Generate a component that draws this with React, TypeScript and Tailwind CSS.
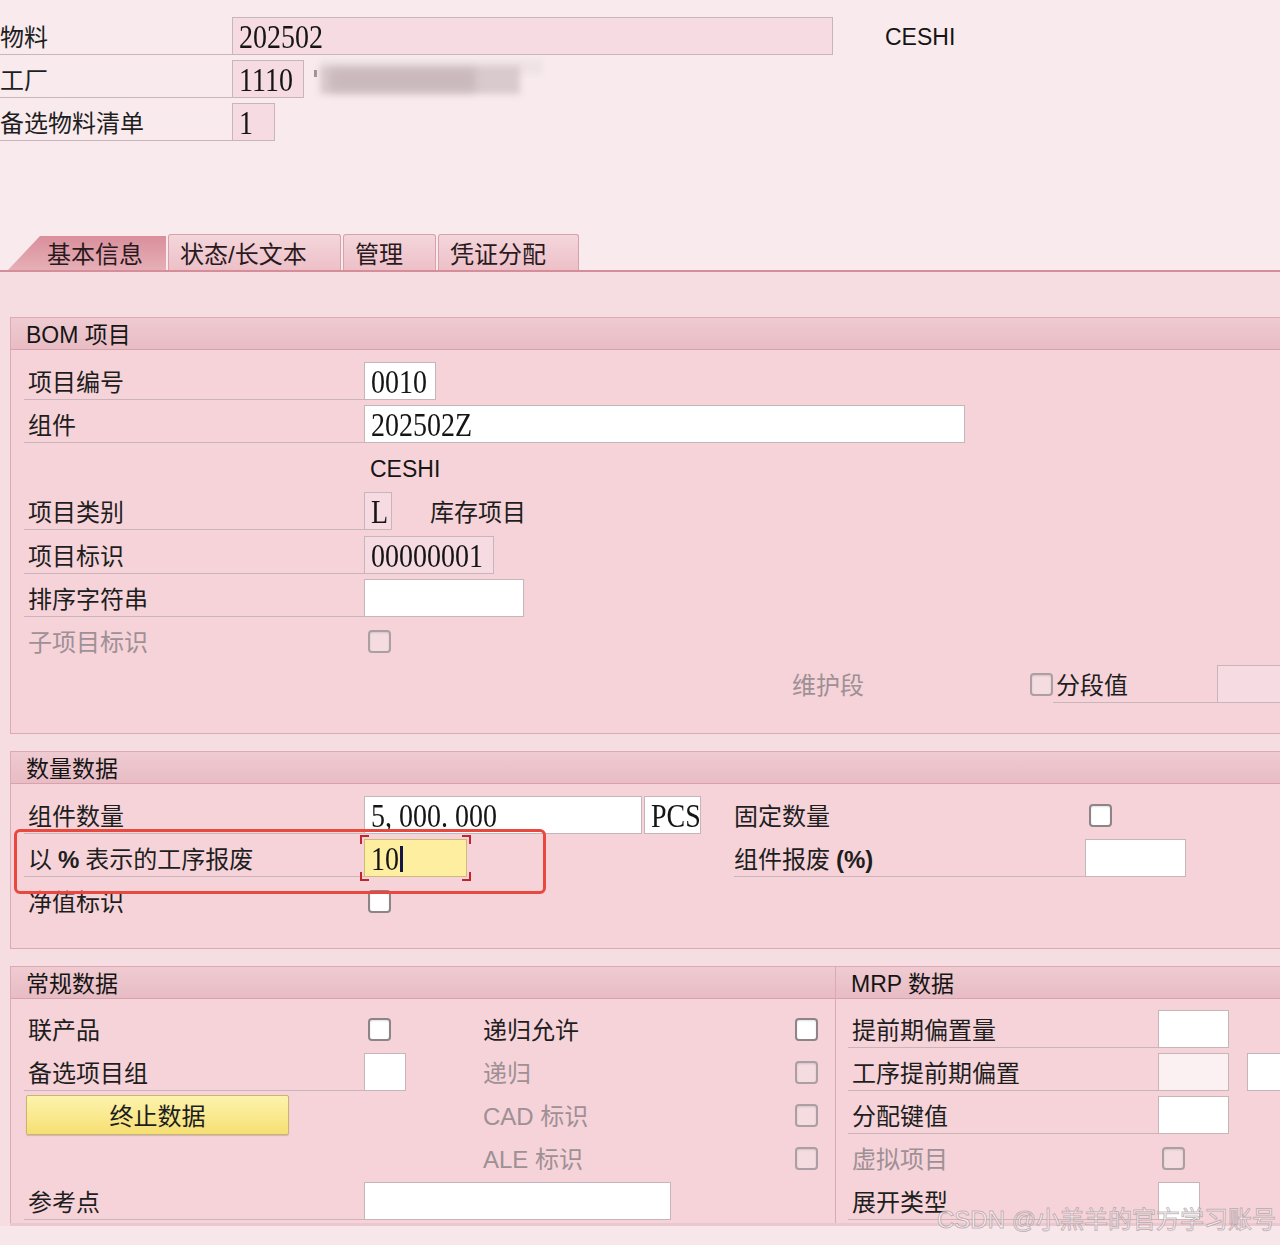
import React from 'react';

const sans = "font-['Liberation_Sans','Noto_Sans_CJK_SC',sans-serif]";
const serif = "font-['Liberation_Serif','Noto_Serif_CJK_SC',serif]";

// input-like box with SAP fixed font text
function Box({ w, value, tone = 'white', children }: { w: string; value?: string; tone?: 'white' | 'pink' | 'soft'; children?: React.ReactNode }) {
  const bg = tone === 'white' ? 'bg-white' : tone === 'pink' ? 'bg-[#f6dce2]' : 'bg-[#fbf1f3]';
  return (
    <div className={`${w} h-[38px] shrink-0 ${bg} border border-[#c6b6ba] flex items-center pl-[6px] pt-[2px] relative`}>
      {value && <span className={`${serif} text-[28px] leading-none text-[#151515] inline-block scale-y-120`}>{value}</span>}
      {children}
    </div>
  );
}

function Check({ disabled = false }: { disabled?: boolean }) {
  return (
    <div
      className={`w-[23px] h-[23px] shrink-0 rounded-[4px] border-2 ${
        disabled ? 'border-[#ab9fa3] bg-[#f4dce1]' : 'border-[#8e8488] bg-white'
      } shadow-[inset_0_1px_2px_rgba(0,0,0,0.12)]`}
    />
  );
}

function Label({ text, w, line = true, gray = false, pl = 'pl-[4px]' }: { text: React.ReactNode; w: string; line?: boolean; gray?: boolean; pl?: string }) {
  return (
    <div
      className={`${w} h-[38px] shrink-0 flex items-center pt-[4px] ${pl} text-[24px] ${gray ? 'text-[#9e9095]' : 'text-[#1e1e1e]'} ${
        line ? 'border-b border-[#c9b5ba]' : ''
      }`}
    >
      {text}
    </div>
  );
}

function GroupHeader({ title }: { title: string }) {
  return (
    <div className="h-[32px] flex items-center pt-[3px] pl-[15px] text-[23px] text-[#151515] bg-gradient-to-b from-[#efcbd1] to-[#e8bcc4] border-b border-[#d7a2ac]">
      {title}
    </div>
  );
}

function Tab({ text, active = false, w }: { text: string; active?: boolean; w: string }) {
  if (active) {
    return (
      <div className={`${w} h-[34px] bg-gradient-to-b from-[#d98f9b] to-[#e6afb7] [clip-path:polygon(32px_0,100%_0,100%_100%,0_100%)] flex items-center pt-[4px] pl-[39px] text-[24px] text-[#2a1a1d]`}>
        {text}
      </div>
    );
  }
  return (
    <div className={`${w} h-[36px] ml-[2px] bg-gradient-to-b from-[#f4d6db] to-[#edc0c8] border border-b-0 border-[#d5a2ab] rounded-t-[3px] flex items-center pt-[4px] pl-[11px] text-[24px] text-[#2a1a1d]`}>
      {text}
    </div>
  );
}

function Bracket({ pos }: { pos: 'tl' | 'tr' | 'bl' | 'br' }) {
  const map = {
    tl: 'left-[-5px] top-[-5px] border-l-2 border-t-2',
    tr: 'right-[-5px] top-[-5px] border-r-2 border-t-2',
    bl: 'left-[-5px] bottom-[-5px] border-l-2 border-b-2',
    br: 'right-[-5px] bottom-[-5px] border-r-2 border-b-2',
  };
  return <div className={`absolute w-[9px] h-[9px] border-[#c3262a] ${map[pos]}`} />;
}

export default function App() {
  return (
    <div className={`w-[1280px] h-[1245px] overflow-hidden relative bg-[#f8eaed] ${sans} text-[#1e1e1e]`}>
      {/* header fields */}
      <div className="pt-[17px] flex flex-col gap-[5px]">
        <div className="flex items-center">
          <Label text="物料" w="w-[232px]" pl="pl-0" />
          <Box w="w-[601px]" value="202502" tone="pink" />
          <div className="ml-[52px] pt-[3px] text-[23px] text-[#151515]">CESHI</div>
        </div>
        <div className="flex items-center">
          <Label text="工厂" w="w-[232px]" pl="pl-0" />
          <Box w="w-[72px]" value="1110" tone="pink" />
          <div className="relative ml-[10px] w-[230px] h-[38px]">
            <div className="absolute left-[0px] top-[10px] w-[3px] h-[7px] bg-[#9b9094]" />
            <div className="absolute left-[8px] top-[0px] w-[220px] h-[14px] bg-[#efe3e6] blur-[2px]" />
            <div className="absolute left-[6px] top-[6px] w-[200px] h-[28px] bg-[#d9cacd] blur-[3px]" />
            <div className="absolute left-[16px] top-[9px] w-[145px] h-[22px] bg-[#c9b8bc] blur-[4px]" />
          </div>
        </div>
        <div className="flex items-center">
          <Label text="备选物料清单" w="w-[232px]" pl="pl-0" />
          <Box w="w-[43px]" value="1" tone="pink" />
        </div>
      </div>

      {/* tabs */}
      <div className="mt-[93px] h-[36px] flex items-end pl-[8px]">
        <Tab text="基本信息" active w="w-[158px]" />
        <Tab text="状态/长文本" w="w-[173px]" />
        <Tab text="管理" w="w-[93px]" />
        <Tab text="凭证分配" w="w-[141px]" />
      </div>
      <div className="h-[2px] bg-[#d48d99]" />

      {/* tab content */}
      <div className="bg-[#f6dde2] pt-[45px] h-[975px]">
        {/* BOM item */}
        <div className="ml-[10px] w-[1290px] border border-[#dcaab3] bg-[#f5d3d9]">
          <GroupHeader title="BOM 项目" />
          <div className="pt-[12px] pl-[13px] pb-[30px] flex flex-col gap-[5px]">
            <div className="flex">
              <Label text="项目编号" w="w-[340px]" />
              <Box w="w-[72px]" value="0010" />
            </div>
            <div className="flex">
              <Label text="组件" w="w-[340px]" />
              <Box w="w-[601px]" value="202502Z" />
            </div>
            <div className="flex h-[38px] items-center">
              <div className="w-[340px]" />
              <div className="pl-[6px] pt-[4px] text-[23px] text-[#151515]">CESHI</div>
            </div>
            <div className="flex items-center">
              <Label text="项目类别" w="w-[340px]" />
              <Box w="w-[28px]" value="L" tone="pink" />
              <div className="ml-[38px] pt-[4px] text-[24px]">库存项目</div>
            </div>
            <div className="flex">
              <Label text="项目标识" w="w-[340px]" />
              <Box w="w-[130px]" value="00000001" tone="pink" />
            </div>
            <div className="flex">
              <Label text="排序字符串" w="w-[340px]" />
              <Box w="w-[160px]" />
            </div>
            <div className="flex items-center">
              <Label text="子项目标识" w="w-[340px]" line={false} gray />
              <div className="ml-[4px]">
                <Check disabled />
              </div>
            </div>
            <div className="flex items-center">
              <div className="w-[768px] shrink-0" />
              <Label text="维护段" w="w-[238px]" line={false} gray pl="pl-0" />
              <Check disabled />
              <Label text="分段值" w="w-[164px]" pl="pl-[3px]" />
              <Box w="w-[80px]" tone="pink" />
            </div>
          </div>
        </div>

        {/* quantity data */}
        <div className="relative mt-[17px] ml-[10px] w-[1290px] border border-[#dcaab3] bg-[#f5d3d9]">
          <GroupHeader title="数量数据" />
          <div className="pt-[12px] pl-[13px] pb-[28px] flex flex-col gap-[5px]">
            <div className="flex items-center">
              <Label text="组件数量" w="w-[340px]" />
              <Box w="w-[278px]" value="5, 000. 000" />
              <div className="ml-[2px]">
                <Box w="w-[57px]" value="PCS" />
              </div>
              <div className="w-[33px] shrink-0" />
              <Label text="固定数量" w="w-[355px]" line={false} pl="pl-0" />
              <Check />
            </div>
            <div className="flex items-center">
              <Label text={<>以 <b className="mx-[6px]">%</b> 表示的工序报废</>} w="w-[340px]" />
              <div className="relative w-[103px] h-[38px] shrink-0 bg-[#fdef9f] border border-[#cdbb7a] flex items-center pl-[6px] pt-[2px]">
                <span className={`${serif} text-[28px] leading-none text-[#151515] inline-block scale-y-120`}>10</span>
                <div className="w-[3px] h-[26px] bg-[#15154a] ml-[1px]" />
                <Bracket pos="tl" />
                <Bracket pos="tr" />
                <Bracket pos="bl" />
                <Bracket pos="br" />
              </div>
              <div className="w-[267px] shrink-0" />
              <Label text={<>组件报废 <b className="ml-[6px]">(%)</b></>} w="w-[351px]" pl="pl-0" />
              <Box w="w-[101px]" />
            </div>
            <div className="flex items-center">
              <Label text="净值标识" w="w-[340px]" line={false} />
              <div className="ml-[4px]">
                <Check />
              </div>
            </div>
          </div>
          <div className="absolute left-[3px] top-[77px] w-[532px] h-[65px] border-[3px] border-[#e8483d] rounded-[6px]" />
        </div>

        {/* general data + MRP data */}
        <div className="mt-[17px] ml-[10px] w-[1290px] flex border border-b-0 border-[#dcaab3] bg-[#f5d3d9] h-[257px]">
          <div className="w-[825px] shrink-0 border-r border-[#dcaab3]">
            <GroupHeader title="常规数据" />
            <div className="pt-[11px] pl-[13px] flex flex-col gap-[5px]">
              <div className="flex items-center">
                <Label text="联产品" w="w-[340px]" line={false} />
                <div className="w-[119px] shrink-0 pl-[4px]">
                  <Check />
                </div>
                <Label text="递归允许" w="w-[312px]" line={false} pl="pl-0" />
                <Check />
              </div>
              <div className="flex items-center">
                <Label text="备选项目组" w="w-[340px]" />
                <Box w="w-[42px]" />
                <div className="w-[77px] shrink-0" />
                <Label text="递归" w="w-[312px]" line={false} gray pl="pl-0" />
                <Check disabled />
              </div>
              <div className="flex items-center">
                <div className="w-[459px] shrink-0 h-[38px] flex items-center">
                  <div className="ml-[2px] w-[263px] h-[40px] pt-[3px] bg-gradient-to-b from-[#fdf3ad] to-[#f6df72] border border-[#c9b570] rounded-[2px] shadow-[0_1px_1px_rgba(0,0,0,0.15)] flex items-center justify-center text-[24px] text-[#1e1e1e]">
                    终止数据
                  </div>
                </div>
                <Label text="CAD 标识" w="w-[312px]" line={false} gray pl="pl-0" />
                <Check disabled />
              </div>
              <div className="flex items-center">
                <div className="w-[459px] shrink-0" />
                <Label text="ALE 标识" w="w-[312px]" line={false} gray pl="pl-0" />
                <Check disabled />
              </div>
              <div className="flex items-center">
                <Label text="参考点" w="w-[340px]" />
                <Box w="w-[307px]" />
              </div>
            </div>
          </div>
          <div className="flex-1">
            <GroupHeader title="MRP 数据" />
            <div className="pt-[11px] pl-[12px] flex flex-col gap-[5px]">
              <div className="flex items-center">
                <Label text="提前期偏置量" w="w-[310px]" />
                <Box w="w-[71px]" />
              </div>
              <div className="flex items-center">
                <Label text="工序提前期偏置" w="w-[310px]" />
                <Box w="w-[71px]" tone="soft" />
                <div className="ml-[18px]">
                  <Box w="w-[60px]" />
                </div>
              </div>
              <div className="flex items-center">
                <Label text="分配键值" w="w-[310px]" />
                <Box w="w-[71px]" />
              </div>
              <div className="flex items-center">
                <Label text="虚拟项目" w="w-[310px]" line={false} gray />
                <div className="ml-[4px]">
                  <Check disabled />
                </div>
              </div>
              <div className="flex items-center">
                <Label text="展开类型" w="w-[310px]" />
                <Box w="w-[42px]" />
              </div>
            </div>
          </div>
        </div>
        <div className="h-[3px] ml-[10px] bg-[#e9c9cf]" />
        <div className="h-[40px] bg-[#f7e6ea]" />
      </div>

      {/* watermark */}
      <div className="absolute left-[937px] top-[1208px] text-[24px] leading-none text-[rgba(255,255,255,0.75)] [-webkit-text-stroke:1px_rgba(150,130,135,0.55)] whitespace-nowrap">
        CSDN @小羔羊的官方学习账号
      </div>
    </div>
  );
}
